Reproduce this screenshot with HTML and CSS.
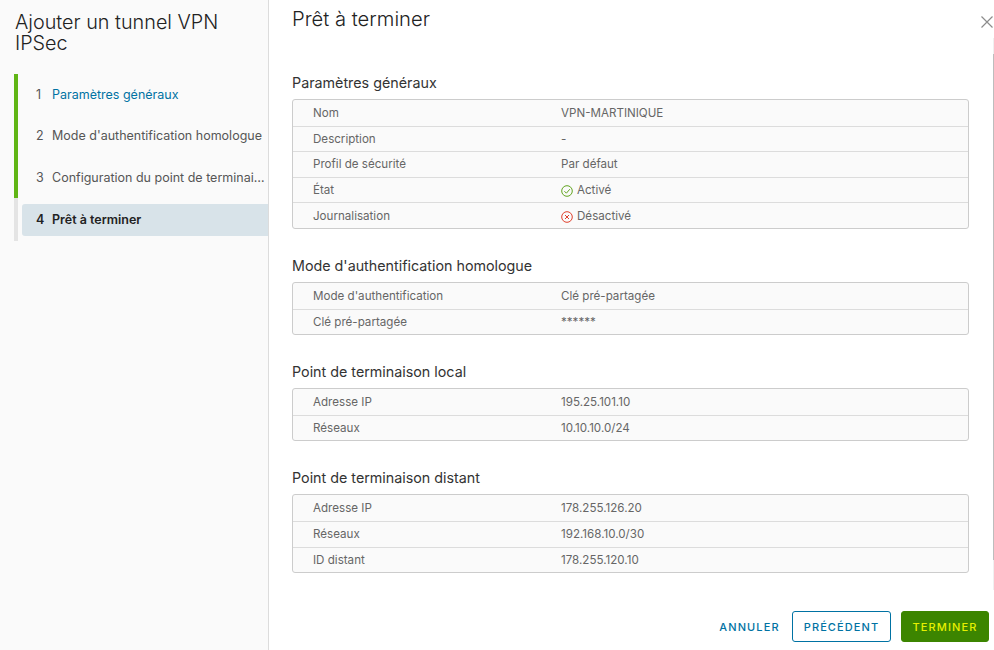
FILE: index.html
```html
<!DOCTYPE html>
<html lang="fr">
<head>
<meta charset="utf-8">
<title>Ajouter un tunnel VPN IPSec</title>
<link rel="stylesheet" href="styles.css">
</head>
<body>
<div class="wizard">
  <aside class="side">
    <h1 class="wiz-title">Ajouter un tunnel VPN IPSec</h1>
    <ol class="steps">
      <li class="step done current-link"><span class="num">1</span><span class="lbl">Paramètres généraux</span></li>
      <li class="step done"><span class="num">2</span><span class="lbl">Mode d'authentification homologue</span></li>
      <li class="step done"><span class="num">3</span><span class="lbl">Configuration du point de terminai…</span></li>
      <li class="step active"><div class="pill"><span class="num">4</span><span class="lbl">Prêt à terminer</span></div></li>
    </ol>
  </aside>
  <main class="main">
    <header class="head">
      <h2 class="page-title">Prêt à terminer</h2>
      <svg class="close" viewBox="0 0 12 12" width="12" height="12"><path d="M.5.5l11 11M11.5.5l-11 11" stroke="#8c8c8c" stroke-width="1.2" fill="none"/></svg>
    </header>
    <div class="body">
      <div class="scroll"><div class="thumb"></div></div>
      <section class="sec">
        <h3>Paramètres généraux</h3>
        <div class="tbl">
          <div class="row"><span class="k">Nom</span><span class="v">VPN-MARTINIQUE</span></div>
          <div class="row"><span class="k">Description</span><span class="v">-</span></div>
          <div class="row"><span class="k">Profil de sécurité</span><span class="v">Par défaut</span></div>
          <div class="row"><span class="k">État</span><span class="v"><svg class="st" viewBox="0 0 12 12" width="12" height="12"><circle cx="6" cy="6" r="5.3" fill="none" stroke="#62a420"/><path d="M3.4 6.2l2 2 3.4-4" fill="none" stroke="#62a420"/></svg>Activé</span></div>
          <div class="row"><span class="k">Journalisation</span><span class="v"><svg class="st" viewBox="0 0 12 12" width="12" height="12"><circle cx="6" cy="6" r="5.3" fill="none" stroke="#e0402c"/><path d="M4 4l4 4M8 4l-4 4" fill="none" stroke="#e0402c"/></svg>Désactivé</span></div>
        </div>
      </section>
      <section class="sec">
        <h3>Mode d'authentification homologue</h3>
        <div class="tbl">
          <div class="row"><span class="k">Mode d'authentification</span><span class="v">Clé pré-partagée</span></div>
          <div class="row"><span class="k">Clé pré-partagée</span><span class="v">******</span></div>
        </div>
      </section>
      <section class="sec">
        <h3>Point de terminaison local</h3>
        <div class="tbl">
          <div class="row"><span class="k">Adresse IP</span><span class="v">195.25.101.10</span></div>
          <div class="row"><span class="k">Réseaux</span><span class="v">10.10.10.0/24</span></div>
        </div>
      </section>
      <section class="sec">
        <h3>Point de terminaison distant</h3>
        <div class="tbl">
          <div class="row"><span class="k">Adresse IP</span><span class="v">178.255.126.20</span></div>
          <div class="row"><span class="k">Réseaux</span><span class="v">192.168.10.0/30</span></div>
          <div class="row"><span class="k">ID distant</span><span class="v">178.255.120.10</span></div>
        </div>
      </section>
    </div>
    <footer class="foot">
      <button class="btn link">ANNULER</button>
      <button class="btn outline">PRÉCÉDENT</button>
      <button class="btn primary">TERMINER</button>
    </footer>
  </main>
</div>
</body>
</html>
```
FILE: styles.css
```css
* { box-sizing: border-box; }
html, body { margin: 0; height: 100%; }
body { font-family: Inter, "Noto Sans", sans-serif; background: #fff; color: #565656; overflow: hidden; }
.wizard { display: flex; width: 994px; height: 650px; }
.side { width: 269px; flex: none; background: #fafafa; border-right: 1px solid #dcdcdc; padding: 12px 0 0 14px; }
.wiz-title { margin: 0 40px 0 1px; font-size: 19.8px; font-weight: 300; line-height: 21px; color: #222; }
.steps { list-style: none; margin: 20px 0 0 0; padding: 0; }
.step { height: 41.33px; display: flex; align-items: center; border-left: 4px solid #60b515; padding-left: 18px; font-size: 12.5px; color: #565656; white-space: nowrap; }
.num { width: 16px; flex: none; }
.current-link .lbl { color: #0072a3; }
.step.active { height: 43px; border-left-color: #e4e4e4; padding-left: 4px; font-weight: 600; color: #222; align-items: flex-start; }
.pill { flex: 1; display: flex; height: 32px; line-height: 32px; margin-top: 6px; padding-left: 14px; background: #d8e3e9; border-radius: 3px 0 0 3px; }
.main { flex: 1; display: flex; flex-direction: column; min-width: 0; }
.head { flex: none; display: flex; justify-content: space-between; padding: 7px 0 0 23px; height: 38px; }
.page-title { margin: 0; font-size: 20.2px; font-weight: 300; line-height: 24px; color: #222; }
.close { margin: 9px 1px 0 0; }
.body { position: relative; flex: 1; min-height: 0; padding: 35px 25px 0 23px; }
.scroll { position: absolute; top: 0; bottom: 0; right: 0; width: 1px; background: #f0f0f0; }
.thumb { margin-top: 16px; height: 506px; background: #bdbdbd; }
.sec { margin-bottom: 27px; }
.sec:last-child { margin-bottom: 0; }
.sec h3 { margin: 0 0 7px; font-size: 14.3px; font-weight: 400; line-height: 19px; color: #333; }
.tbl { border: 1px solid #ccc; border-radius: 3px; background: #fafafa; }
.row { display: flex; align-items: center; height: 25.6px; border-top: 1px solid #dcdcdc; font-size: 11.6px; color: #666; padding-left: 20px; }
.row:first-child { border-top: 0; }
.k { width: 248px; flex: none; }
.v { display: flex; align-items: center; }
.st { margin: 2px 4px 0 0; flex: none; }
.foot { flex: none; height: 60px; display: flex; justify-content: flex-end; align-items: flex-start; gap: 10px; padding: 21px 5px 0 0; }
.btn { height: 31px; font-family: inherit; font-size: 11px; font-weight: 500; letter-spacing: 1.1px; border-radius: 3px; background: transparent; padding: 0; }
.link { border: 0; color: #0072a3; width: 61px; margin-right: 2px; }
.outline { border: 1px solid #0072a3; color: #0072a3; width: 99px; background: #fff; }
.primary { border: 1px solid #3c8500; background: #3c8500; color: #e6f000; width: 88px; }
```
